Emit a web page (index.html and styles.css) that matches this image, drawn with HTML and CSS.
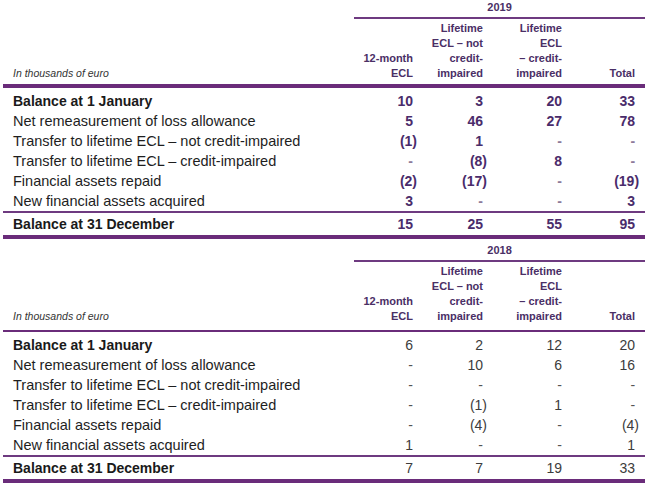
FILE: index.html
```html
<!DOCTYPE html>
<html lang="en">
<head>
<meta charset="utf-8">
<title>Loss allowance</title>
<link rel="stylesheet" href="styles.css">
</head>
<body>
<table class="ecl ecl-2019">
  <colgroup><col class="c-label"><col class="c1"><col class="c2"><col class="c3"><col class="c4"></colgroup>
  <thead>
    <tr class="year-row"><th></th><th colspan="4" class="year">2019</th></tr>
    <tr class="head-row">
      <th class="unit">In thousands of euro</th>
      <th>12-month<br>ECL</th>
      <th>Lifetime<br>ECL – not<br>credit-<br>impaired</th>
      <th>Lifetime<br>ECL<br>– credit-<br>impaired</th>
      <th>Total</th>
    </tr>
  </thead>
  <tbody>
    <tr class="first bold"><td>Balance at 1 January</td><td>10</td><td>3</td><td>20</td><td>33</td></tr>
    <tr><td>Net remeasurement of loss allowance</td><td>5</td><td>46</td><td>27</td><td>78</td></tr>
    <tr><td>Transfer to lifetime ECL – not credit-impaired</td><td><span class="neg">(1)</span></td><td>1</td><td class="dash">-</td><td class="dash">-</td></tr>
    <tr><td>Transfer to lifetime ECL – credit-impaired</td><td class="dash">-</td><td><span class="neg">(8)</span></td><td>8</td><td class="dash">-</td></tr>
    <tr><td>Financial assets repaid</td><td><span class="neg">(2)</span></td><td><span class="neg">(17)</span></td><td class="dash">-</td><td><span class="neg">(19)</span></td></tr>
    <tr><td>New financial assets acquired</td><td>3</td><td class="dash">-</td><td class="dash">-</td><td>3</td></tr>
    <tr class="total bold"><td>Balance at 31 December</td><td>15</td><td>25</td><td>55</td><td>95</td></tr>
  </tbody>
</table>

<table class="ecl ecl-2018">
  <colgroup><col class="c-label"><col class="c1"><col class="c2"><col class="c3"><col class="c4"></colgroup>
  <thead>
    <tr class="year-row"><th></th><th colspan="4" class="year">2018</th></tr>
    <tr class="head-row">
      <th class="unit">In thousands of euro</th>
      <th>12-month<br>ECL</th>
      <th>Lifetime<br>ECL – not<br>credit-<br>impaired</th>
      <th>Lifetime<br>ECL<br>– credit-<br>impaired</th>
      <th>Total</th>
    </tr>
  </thead>
  <tbody>
    <tr class="first bold"><td>Balance at 1 January</td><td>6</td><td>2</td><td>12</td><td>20</td></tr>
    <tr><td>Net remeasurement of loss allowance</td><td class="dash">-</td><td>10</td><td>6</td><td>16</td></tr>
    <tr><td>Transfer to lifetime ECL – not credit-impaired</td><td class="dash">-</td><td class="dash">-</td><td class="dash">-</td><td class="dash">-</td></tr>
    <tr><td>Transfer to lifetime ECL – credit-impaired</td><td class="dash">-</td><td><span class="neg">(1)</span></td><td>1</td><td class="dash">-</td></tr>
    <tr><td>Financial assets repaid</td><td class="dash">-</td><td><span class="neg">(4)</span></td><td class="dash">-</td><td><span class="neg">(4)</span></td></tr>
    <tr><td>New financial assets acquired</td><td>1</td><td class="dash">-</td><td class="dash">-</td><td>1</td></tr>
    <tr class="total bold"><td>Balance at 31 December</td><td>7</td><td>7</td><td>19</td><td>33</td></tr>
  </tbody>
</table>
</body>
</html>
```

FILE: styles.css
```css
html, body {
  margin: 0;
  padding: 0;
  background: #ffffff;
}

body {
  font-family: "Liberation Sans", Arial, sans-serif;
  color: #1e1e1e;
}

.ecl {
  width: 642px;
  margin-left: 3px;
  table-layout: fixed;
  border-collapse: separate;
  border-spacing: 0;
}

.ecl-2018 {
  margin-top: 4px;
}

.c-label { width: 351px; }
.c1 { width: 69px; }
.c2 { width: 70px; }
.c3 { width: 79px; }
.c4 { width: 73px; }

.ecl th,
.ecl td {
  padding: 0 10px 0 0;
  text-align: right;
}

/* year header */
.year-row th {
  height: 17px;
  padding: 0;
  font-size: 11px;
  line-height: 15px;
  font-weight: bold;
  color: #4a2f66;
  text-align: center;
  vertical-align: top;
}

.year-row .year {
  border-bottom: 2px solid #6e3a80;
}

/* column header */
.head-row th {
  padding-top: 2px;
  padding-bottom: 3px;
  font-size: 11px;
  line-height: 15px;
  font-weight: bold;
  color: #4a2f66;
  vertical-align: bottom;
  border-bottom: 4px solid #6a2c7a;
}

.ecl-2018 .head-row th {
  padding-bottom: 6px;
  border-bottom-width: 2px;
}

.head-row .unit {
  padding-left: 10px;
  text-align: left;
  font-size: 10.5px;
  font-weight: normal;
  font-style: italic;
  color: #333333;
}

/* body */
.ecl td {
  height: 20px;
  font-size: 14px;
  line-height: 20px;
  vertical-align: middle;
  white-space: nowrap;
}

.ecl td:first-child {
  padding-left: 10px;
  text-align: left;
  font-size: 14.5px;
  color: #1e1e1e;
}

.ecl-2019 td {
  font-weight: bold;
  color: #4a2c6b;
}

.ecl-2019 td:first-child {
  font-weight: normal;
}

.ecl-2019 td.dash {
  color: #8d7a9a;
}

.ecl-2018 td {
  color: #3c3c3c;
}

.ecl-2018 td.dash {
  color: #555555;
}

.ecl .bold td:first-child {
  font-size: 14px;
  font-weight: bold;
  color: #1a1a1a;
}

.ecl .first td {
  padding-top: 3px;
}

.ecl .total td {
  height: 22px;
  border-top: 2px solid #6e3a80;
  border-bottom: 4px solid #6a2c7a;
}

.neg {
  margin-right: -4px;
}
```
